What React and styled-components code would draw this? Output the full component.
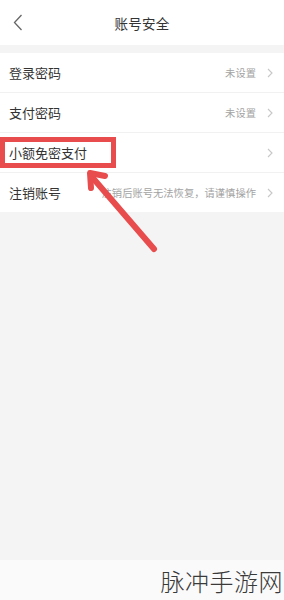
import React from "react";
import styled, { createGlobalStyle } from "styled-components";

const GlobalStyle = createGlobalStyle`
  html, body {
    margin: 0;
    padding: 0;
    background: #f4f4f4;
  }
  body {
    font-family: "Noto Sans CJK SC", "Noto Sans", sans-serif;
  }
`;

const Page = styled.div`
  position: relative;
  width: 284px;
  height: 600px;
  display: flex;
  flex-direction: column;
  background: #f4f4f4;
  overflow: hidden;
`;

const Header = styled.div`
  height: 45px;
  flex-shrink: 0;
  background: #fff;
  display: flex;
  align-items: center;
  justify-content: center;
  position: relative;
`;

const Back = styled.button`
  position: absolute;
  left: 10px;
  top: 12px;
  width: 16px;
  height: 20px;
  border: 0;
  padding: 0;
  background: none;
  display: flex;
  align-items: center;
  justify-content: center;
`;

const Title = styled.div`
  font-size: 13.5px;
  color: #333;
  letter-spacing: 0.3px;
`;

const List = styled.div`
  margin-top: 8px;
  background: #fff;
`;

const Row = styled.div`
  height: 39px;
  display: flex;
  align-items: center;
  padding: 0 11px 0 9px;
  border-bottom: ${(p) => (p.last ? "none" : "1px solid #f1f1f1")};
`;

const Label = styled.div`
  font-size: 13px;
  color: #333;
  flex-shrink: 0;
`;

const Hint = styled.div`
  margin-left: auto;
  font-size: 10.3px;
  color: #a3a3a3;
  white-space: nowrap;
`;

const Arrow = styled.span`
  margin-left: ${(p) => (p.alone ? "auto" : "11px")};
  display: flex;
  align-items: center;
`;

const Spacer = styled.div`
  flex: 1;
`;

const Footer = styled.div`
  height: 40px;
  flex-shrink: 0;
  background: #fafafa;
  display: flex;
  align-items: center;
  justify-content: flex-end;
  padding-right: 1px;
`;

const Mark = styled.div`
  font-size: 24px;
  font-weight: 300;
  color: #3a3a3a;
  letter-spacing: 0.5px;
`;

const Overlay = styled.svg`
  position: absolute;
  left: 0;
  top: 0;
  pointer-events: none;
`;

const Chevron = () => (
  <svg width="6" height="10" viewBox="0 0 6 10">
    <path d="M1 1l4 4-4 4" fill="none" stroke="#c8c8c8" strokeWidth="1.1" />
  </svg>
);

const rows = [
  { label: "登录密码", hint: "未设置" },
  { label: "支付密码", hint: "未设置" },
  { label: "小额免密支付" },
  { label: "注销账号", hint: "注销后账号无法恢复，请谨慎操作" },
];

export default function App() {
  return (
    <Page>
      <GlobalStyle />
      <Header>
        <Back>
          <svg width="10" height="17" viewBox="0 0 10 17">
            <path d="M8.5 1L1.5 8.5l7 7.5" fill="none" stroke="#666" strokeWidth="1.3" />
          </svg>
        </Back>
        <Title>账号安全</Title>
      </Header>
      <List>
        {rows.map((r, i) => (
          <Row key={r.label} last={i === rows.length - 1}>
            <Label>{r.label}</Label>
            {r.hint && <Hint>{r.hint}</Hint>}
            <Arrow alone={!r.hint}>
              <Chevron />
            </Arrow>
          </Row>
        ))}
      </List>
      <Spacer />
      <Footer>
        <Mark>脉冲手游网</Mark>
      </Footer>

      {/* red annotation drawn on the screenshot */}
      <Overlay width="284" height="600" viewBox="0 0 284 600">
        <rect x="2.5" y="139.5" width="111" height="26" fill="none" stroke="#e84c4c" strokeWidth="5" />
        <path d="M154 249L92 177" stroke="#e84c4c" strokeWidth="6" strokeLinecap="round" />
        <path d="M105 176L90 173L91 188" fill="none" stroke="#e84c4c" strokeWidth="6" strokeLinecap="round" strokeLinejoin="round" />
      </Overlay>
    </Page>
  );
}
